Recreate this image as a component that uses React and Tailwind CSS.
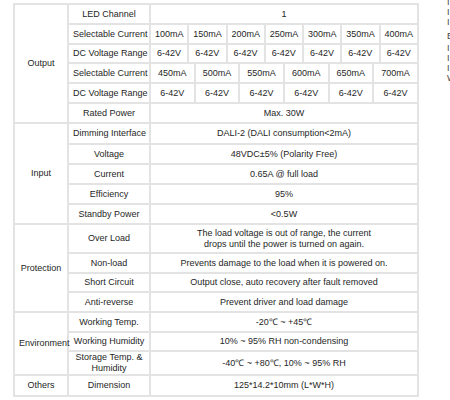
import React from 'react';

const cell = 'border-2 border-[#e3e3e3] text-center align-middle px-1 leading-[11px] whitespace-nowrap';

const currents1 = ['100mA', '150mA', '200mA', '250mA', '300mA', '350mA', '400mA'];
const currents2 = ['450mA', '500mA', '550mA', '600mA', '650mA', '700mA'];

const Row = ({ h = 'h-[20px]', children }) => <tr className={h}>{children}</tr>;

export default function App() {
    return (
        <div className="w-[450px] h-[400px] overflow-hidden bg-white flex items-start pt-[3px] font-['Liberation_Sans',Arial,sans-serif] text-[9px] text-[#262626]">
            <table className="ml-[13px] w-[406px] shrink-0 table-fixed border-collapse">
                <colgroup>
                    <col className="w-[54px]" />
                    <col className="w-[82px]" />
                    {Array.from({ length: 42 }).map((_, i) => <col key={i} />)}
                </colgroup>
                <tbody>
                    {/* Output */}
                    <Row>
                        <td rowSpan={6} className={cell}>Output</td>
                        <td className={cell}>LED Channel</td>
                        <td colSpan={42} className={cell}>1</td>
                    </Row>
                    <Row>
                        <td className={cell}>Selectable Current</td>
                        {currents1.map(c => <td key={c} colSpan={6} className={cell}>{c}</td>)}
                    </Row>
                    <Row h="h-[19px]">
                        <td className={cell}>DC Voltage Range</td>
                        {currents1.map(c => <td key={c} colSpan={6} className={cell}>6-42V</td>)}
                    </Row>
                    <Row>
                        <td className={cell}>Selectable Current</td>
                        {currents2.map(c => <td key={c} colSpan={7} className={cell}>{c}</td>)}
                    </Row>
                    <Row>
                        <td className={cell}>DC Voltage Range</td>
                        {currents2.map(c => <td key={c} colSpan={7} className={cell}>6-42V</td>)}
                    </Row>
                    <Row>
                        <td className={cell}>Rated Power</td>
                        <td colSpan={42} className={cell}>Max. 30W</td>
                    </Row>

                    {/* Input */}
                    <Row h="h-[21px]">
                        <td rowSpan={5} className={cell}>Input</td>
                        <td className={cell}>Dimming Interface</td>
                        <td colSpan={42} className={cell}>DALI-2 (DALI consumption&lt;2mA)</td>
                    </Row>
                    <Row>
                        <td className={cell}>Voltage</td>
                        <td colSpan={42} className={cell}>48VDC±5% (Polarity Free)</td>
                    </Row>
                    <Row>
                        <td className={cell}>Current</td>
                        <td colSpan={42} className={cell}>0.65A @ full load</td>
                    </Row>
                    <Row>
                        <td className={cell}>Efficiency</td>
                        <td colSpan={42} className={cell}>95%</td>
                    </Row>
                    <Row>
                        <td className={cell}>Standby Power</td>
                        <td colSpan={42} className={cell}>&lt;0.5W</td>
                    </Row>

                    {/* Protection */}
                    <Row h="h-[29px]">
                        <td rowSpan={4} className={cell}>Protection</td>
                        <td className={cell}>Over Load</td>
                        <td colSpan={42} className={cell}>
                            The load voltage is out of range, the current<br />drops until the power is turned on again.
                        </td>
                    </Row>
                    <Row>
                        <td className={cell}>Non-load</td>
                        <td colSpan={42} className={cell}>Prevents damage to the load when it is powered on.</td>
                    </Row>
                    <Row h="h-[19px]">
                        <td className={cell}>Short Circuit</td>
                        <td colSpan={42} className={cell}>Output close, auto recovery after fault removed</td>
                    </Row>
                    <Row>
                        <td className={cell}>Anti-reverse</td>
                        <td colSpan={42} className={cell}>Prevent driver and load damage</td>
                    </Row>

                    {/* Environment */}
                    <Row>
                        <td rowSpan={3} className={cell}>Environment</td>
                        <td className={cell}>Working Temp.</td>
                        <td colSpan={42} className={cell}>-20℃ ~ +45℃</td>
                    </Row>
                    <Row h="h-[19px]">
                        <td className={cell}>Working Humidity</td>
                        <td colSpan={42} className={cell}>10% ~ 95% RH non-condensing</td>
                    </Row>
                    <Row h="h-[21px]">
                        <td className={cell}>Storage Temp. &amp;<br />Humidity</td>
                        <td colSpan={42} className={cell}>-40℃ ~ +80℃, 10% ~ 95% RH</td>
                    </Row>

                    {/* Others */}
                    <Row h="h-[21px]">
                        <td className={cell}>Others</td>
                        <td className={cell}>Dimension</td>
                        <td colSpan={42} className={cell}>125*14.2*10mm (L*W*H)</td>
                    </Row>
                </tbody>
            </table>

            {/* neighbouring column, cut by the page edge */}
            <div className="ml-[28px] shrink-0 flex flex-col leading-[10px] -mt-[6px] whitespace-nowrap text-[#444]">
                <span>I</span>
                <span>I</span>
                <span>I</span>
                <span className="mt-[4px]">E</span>
                <span className="mt-[2px]">I</span>
                <span>I</span>
                <span>I</span>
                <span>W</span>
            </div>
        </div>
    );
}
